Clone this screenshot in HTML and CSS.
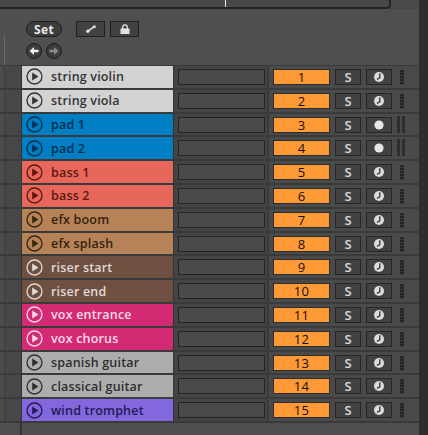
FILE: index.html
```html
<!DOCTYPE html>
<html lang="en">
<head>
<meta charset="utf-8">
<title>Track list</title>
<link rel="stylesheet" href="styles.css">
</head>
<body>
<svg class="defs" width="0" height="0" aria-hidden="true">
  <symbol id="play" viewBox="0 0 17 17"><circle cx="8.500" cy="8.500" r="7.500" fill="none" stroke="currentColor" stroke-width="1.300"/><path d="M6.200 4.400v8.200l6.300-4.100z" fill="currentColor"/></symbol>
  <symbol id="clock" viewBox="0 0 12 12"><circle cx="6" cy="6" r="5" fill="#dcdcdc"/><path d="M6.800 2.200v4.600l-2.800 1.600" fill="none" stroke="#3d3d3d" stroke-width="1.400"/></symbol>
  <symbol id="dot" viewBox="0 0 12 12"><circle cx="6" cy="6" r="4.600" fill="#e6e6e6"/></symbol>
</svg>
<div class="page">
  <main class="main">
    <div class="topbar"><div class="frame"><span class="marker"></span></div></div>
    <header class="head">
      <span class="tick"></span>
      <div class="controls">
        <div class="ctl-row">
          <button class="set">Set</button>
          <button class="box first"><svg width="10" height="8" viewBox="0 0 10 8"><path d="M1.800 6.200 8 1.800" stroke="#e4e4e4" stroke-width="1.500"/><circle cx="1.800" cy="6.200" r="1.700" fill="#e4e4e4"/><circle cx="8.300" cy="1.700" r="1.500" fill="#e4e4e4"/></svg></button>
          <button class="box"><svg width="10" height="10" viewBox="0 0 10 10"><path d="M2.700 5V3.200a2.300 2.300 0 0 1 4.600 0V5" fill="none" stroke="#e4e4e4" stroke-width="1.300"/><rect x="0.500" y="4.500" width="9" height="5.500" fill="#e4e4e4"/></svg></button>
        </div>
        <div class="nav-row">
          <button class="nav"><svg width="10" height="10" viewBox="0 0 10 10"><path d="M0.500 5 5 1v2.700h4.500v2.600H5V9z" fill="#efefef"/></svg></button>
          <button class="nav"><svg width="10" height="10" viewBox="0 0 10 10"><path d="M9.500 5 5 1v2.700H.5v2.600H5V9z" fill="#8a8a8a"/></svg></button>
        </div>
      </div>
    </header>
    <section class="rows">
      <div class="row"><div class="gutter"></div><div class="name c-string"><svg class="play"><use href="#play"/></svg><span>string violin</span></div><div class="slot"><div class="slot-in"></div></div><div class="ctrls"><div class="num">1</div><div class="btn s">S</div><div class="btn"><svg class="ic"><use href="#clock"/></svg></div><div class="meter"></div></div></div>
      <div class="row"><div class="gutter"></div><div class="name c-string"><svg class="play"><use href="#play"/></svg><span>string viola</span></div><div class="slot"><div class="slot-in"></div></div><div class="ctrls"><div class="num">2</div><div class="btn s">S</div><div class="btn"><svg class="ic"><use href="#clock"/></svg></div><div class="meter"></div></div></div>
      <div class="row"><div class="gutter"></div><div class="name c-pad"><svg class="play"><use href="#play"/></svg><span>pad 1</span></div><div class="slot"><div class="slot-in"></div></div><div class="ctrls"><div class="num">3</div><div class="btn s">S</div><div class="btn"><svg class="ic"><use href="#dot"/></svg></div><div class="meter wide"></div></div></div>
      <div class="row"><div class="gutter"></div><div class="name c-pad"><svg class="play"><use href="#play"/></svg><span>pad 2</span></div><div class="slot"><div class="slot-in"></div></div><div class="ctrls"><div class="num">4</div><div class="btn s">S</div><div class="btn"><svg class="ic"><use href="#dot"/></svg></div><div class="meter wide"></div></div></div>
      <div class="row"><div class="gutter"></div><div class="name c-bass"><svg class="play"><use href="#play"/></svg><span>bass 1</span></div><div class="slot"><div class="slot-in"></div></div><div class="ctrls"><div class="num">5</div><div class="btn s">S</div><div class="btn"><svg class="ic"><use href="#clock"/></svg></div><div class="meter"></div></div></div>
      <div class="row"><div class="gutter"></div><div class="name c-bass"><svg class="play"><use href="#play"/></svg><span>bass 2</span></div><div class="slot"><div class="slot-in"></div></div><div class="ctrls"><div class="num">6</div><div class="btn s">S</div><div class="btn"><svg class="ic"><use href="#clock"/></svg></div><div class="meter"></div></div></div>
      <div class="row"><div class="gutter"></div><div class="name c-efx"><svg class="play"><use href="#play"/></svg><span>efx boom</span></div><div class="slot"><div class="slot-in"></div></div><div class="ctrls"><div class="num">7</div><div class="btn s">S</div><div class="btn"><svg class="ic"><use href="#clock"/></svg></div><div class="meter"></div></div></div>
      <div class="row"><div class="gutter"></div><div class="name c-efx"><svg class="play"><use href="#play"/></svg><span>efx splash</span></div><div class="slot"><div class="slot-in"></div></div><div class="ctrls"><div class="num">8</div><div class="btn s">S</div><div class="btn"><svg class="ic"><use href="#clock"/></svg></div><div class="meter"></div></div></div>
      <div class="row"><div class="gutter"></div><div class="name c-riser"><svg class="play"><use href="#play"/></svg><span>riser start</span></div><div class="slot"><div class="slot-in"></div></div><div class="ctrls"><div class="num">9</div><div class="btn s">S</div><div class="btn"><svg class="ic"><use href="#clock"/></svg></div><div class="meter"></div></div></div>
      <div class="row"><div class="gutter"></div><div class="name c-riser"><svg class="play"><use href="#play"/></svg><span>riser end</span></div><div class="slot"><div class="slot-in"></div></div><div class="ctrls"><div class="num">10</div><div class="btn s">S</div><div class="btn"><svg class="ic"><use href="#clock"/></svg></div><div class="meter"></div></div></div>
      <div class="row"><div class="gutter"></div><div class="name c-vox"><svg class="play"><use href="#play"/></svg><span>vox entrance</span></div><div class="slot"><div class="slot-in"></div></div><div class="ctrls"><div class="num">11</div><div class="btn s">S</div><div class="btn"><svg class="ic"><use href="#clock"/></svg></div><div class="meter"></div></div></div>
      <div class="row"><div class="gutter"></div><div class="name c-vox"><svg class="play"><use href="#play"/></svg><span>vox chorus</span></div><div class="slot"><div class="slot-in"></div></div><div class="ctrls"><div class="num">12</div><div class="btn s">S</div><div class="btn"><svg class="ic"><use href="#clock"/></svg></div><div class="meter"></div></div></div>
      <div class="row"><div class="gutter"></div><div class="name c-guitar"><svg class="play"><use href="#play"/></svg><span>spanish guitar</span></div><div class="slot"><div class="slot-in"></div></div><div class="ctrls"><div class="num">13</div><div class="btn s">S</div><div class="btn"><svg class="ic"><use href="#clock"/></svg></div><div class="meter"></div></div></div>
      <div class="row"><div class="gutter"></div><div class="name c-guitar"><svg class="play"><use href="#play"/></svg><span>classical guitar</span></div><div class="slot"><div class="slot-in"></div></div><div class="ctrls"><div class="num">14</div><div class="btn s">S</div><div class="btn"><svg class="ic"><use href="#clock"/></svg></div><div class="meter"></div></div></div>
      <div class="row"><div class="gutter"></div><div class="name c-wind"><svg class="play"><use href="#play"/></svg><span>wind tromphet</span></div><div class="slot"><div class="slot-in"></div></div><div class="ctrls"><div class="num">15</div><div class="btn s">S</div><div class="btn"><svg class="ic"><use href="#clock"/></svg></div><div class="meter"></div></div></div>
    </section>
    <div class="foot"><div class="gutter"></div></div>
  </main>
  <aside class="edge"></aside>
</div>
</body>
</html>
```
FILE: styles.css
```css
* { box-sizing: border-box; }
html, body { margin: 0; height: 100%; overflow: hidden; }
body { background: #4f4f4f; font-family: "Open Sans", "Noto Sans", sans-serif; }
button { padding: 0; margin: 0; font: inherit; cursor: default; }
.defs { position: absolute; }

.page { display: flex; height: 435px; }
.main { width: 419px; display: flex; flex-direction: column; }
.edge { width: 9px; background: #2e2e2e; }

.topbar { height: 9px; flex: none; border-bottom: 1px solid #474747; background: #4a4a4a; }
.frame { width: 391px; height: 9px; background: #474747; border-right: 2px solid #242424; border-bottom: 2px solid #242424; border-bottom-right-radius: 4px; padding-left: 225px; }
.marker { display: block; width: 1px; height: 7px; background: #e8e8e8; }

.head { height: 56px; flex: none; display: flex; }
.tick { width: 1px; height: 30px; margin: 26px 0 0 4px; background: #6a6a6a; }
.controls { margin: 12px 0 0 21px; display: flex; flex-direction: column; gap: 6px; }
.ctl-row { display: flex; height: 16px; gap: 5px; }
.set { width: 36px; height: 16px; border: 1px solid #1d1d1d; border-radius: 8px; background: #3d3d3d; color: #e8e8e8; font-size: 12px; font-weight: 700; line-height: 13px; letter-spacing: .3px; margin-right: 9px; }
.box { width: 29px; height: 16px; border: 1px solid #1f1f1f; background: #424242; display: flex; align-items: center; justify-content: center; }
.nav-row { display: flex; gap: 4px; }
.nav { width: 16px; height: 16px; border: 1px solid #1d1d1d; border-radius: 50%; background: #3d3d3d; display: flex; align-items: center; justify-content: center; }

.rows { flex: none; border-top: 1.800px solid #3a3a3a; }
.row { height: 23.800px; display: flex; border-bottom: 2.800px solid #3a3a3a; }
.gutter { width: 22px; flex: none; }
.row .gutter { background: linear-gradient(90deg, #4c4c4c 0 4px, #3c3c3c 4px 5px, #474747 5px 21px, #333 21px); }
.foot { flex: 1; }
.foot .gutter { height: 100%; background: linear-gradient(90deg, #4f4f4f 0 20px, #333 20px 22px); }

.name { width: 151px; flex: none; display: flex; align-items: center; padding-left: 4px; gap: 8px; font-size: 12.500px; font-weight: 600; letter-spacing: .18px; white-space: nowrap; }
.play { width: 17px; height: 17px; flex: none; }
.c-string { background: #d2d2d2; color: #333; }
.c-pad { background: #007ec4; color: #042f4d; }
.c-bass { background: #e7675b; color: #5e1713; }
.c-efx { background: #b68257; color: #35230f; }
.c-riser { background: #6f4f40; color: #e0dbd8; }
.c-vox { background: #d22a73; color: #f9dbe8; }
.c-guitar { background: #adadad; color: #2e2e2e; }
.c-wind { background: #8367dd; color: #231855; }

.slot { width: 94px; flex: none; padding: 3px 2px 0 4px; background: #444; border-left: 1px solid #333; }
.slot-in { width: 87px; height: 16px; border: 1px solid #252525; background: #4a4a4a; }

.ctrls { flex: 1; display: flex; align-items: flex-start; padding: 3px 0 0 4px; gap: 5px; border-left: 2px solid #3a3a3a; background: #4a4a4a; }
.num { width: 57px; height: 16px; background: #ff9a36; border: 1px solid #2c2c2c; color: #111; font-size: 13px; font-weight: 500; line-height: 14px; text-align: center; letter-spacing: .3px; }
.btn { width: 26px; height: 16px; background: #424242; border: 1px solid #262626; display: flex; align-items: center; justify-content: center; }
.s { color: #d8d8d8; font-size: 13px; font-weight: 600; line-height: 14px; }
.ic { width: 12px; height: 12px; }
.meter { width: 4px; height: 15px; margin: 1px 0 0 3px; background: repeating-linear-gradient(#242424 0 2px, #3a3a3a 2px 3px); border-radius: 1px; }
.meter.wide { width: 8px; height: 17px; margin: -1px 0 0 0; background: linear-gradient(90deg, #2d2d2d 0 3px, #4a4a4a 3px 5px, #2d2d2d 5px 8px); }
```
